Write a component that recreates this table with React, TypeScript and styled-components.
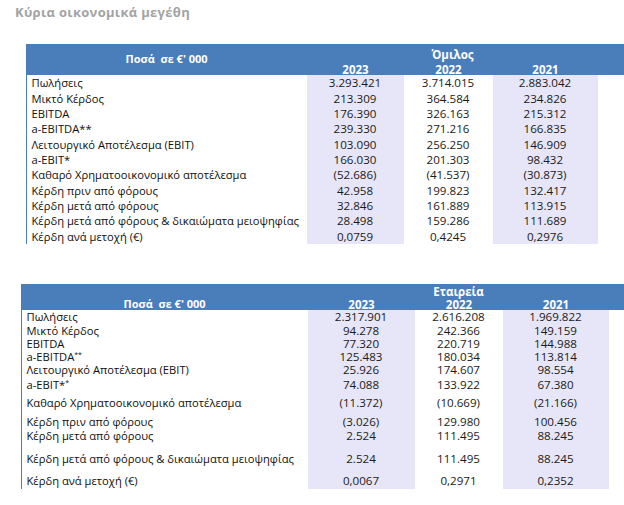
import React from "react";
import styled, { createGlobalStyle } from "styled-components";

const Global = createGlobalStyle`
  html, body { margin: 0; padding: 0; background: #ffffff; }
  body { font-family: "Open Sans", "Noto Sans", sans-serif; color: #1a1a1a; }
`;

const Page = styled.div`
  width: 624px;
  height: 505px;
  overflow: hidden;
  display: flex;
  flex-direction: column;
`;

const Title = styled.h1`
  margin: 4px 0 0 15px;
  height: 17px;
  font-family: "Open Sans", "Noto Sans", sans-serif;
  font-size: 13px;
  line-height: 17px;
  font-weight: 700;
  letter-spacing: 0.3px;
  color: #a3a3a3;
`;

const Table = styled.div<{ $left: number; $top: number; $cols: string }>`
  margin-left: ${(p) => p.$left}px;
  margin-top: ${(p) => p.$top}px;
  display: flex;
  flex-direction: column;
  --cols: ${(p) => p.$cols};
`;

const Head = styled.div<{ $h: number }>`
  height: ${(p) => p.$h}px;
  background: #4a7ebb;
  display: grid;
  grid-template-columns: var(--cols);
  color: #ffffff;
  font-weight: 700;
  font-size: 11.5px;
`;

const HeadLabel = styled.div<{ $align: string }>`
  grid-column: 1;
  display: flex;
  justify-content: center;
  align-items: ${(p) => p.$align};
  padding-bottom: ${(p) => (p.$align === "flex-end" ? "0px" : "1px")};
  white-space: pre;
  font-family: "Open Sans", "Noto Sans", sans-serif;
  font-size: 11px;
  line-height: 14px;
`;

const HeadRows = styled.div<{ $pad: number; $rowH: number }>`
  grid-column: 2 / span 3;
  display: grid;
  grid-template-columns: subgrid;
  grid-template-rows: ${(p) => p.$rowH}px ${(p) => p.$rowH}px;
  padding-top: ${(p) => p.$pad}px;
`;

const HeadGroup = styled.div`
  grid-column: 1 / -1;
  grid-row: 1;
  text-align: center;
  align-self: end;
  line-height: 13px;
`;

const HeadYear = styled.div`
  grid-row: 2;
  text-align: center;
  line-height: 13px;
  align-self: end;
`;

const Body = styled.div`
  display: flex;
  flex-direction: column;
  border-left: 1.5px solid #4a7ebb;
`;

const Row = styled.div<{ $h: number; $pt: number }>`
  display: grid;
  grid-template-columns: var(--cols);
  height: ${(p) => p.$h}px;
  margin-left: -1.5px;
  --pt: ${(p) => p.$pt}px;
`;

const Label = styled.div<{ $pad: number }>`
  padding-left: ${(p) => p.$pad}px;
  padding-top: var(--pt);
  font-family: "Open Sans", "Noto Sans", sans-serif;
  font-size: 11.2px;
  line-height: 12px;
  white-space: nowrap;
  color: #0f0f0f;
`;

const Num = styled.div<{ $shade: boolean }>`
  padding-top: var(--pt);
  text-align: center;
  background: ${(p) => (p.$shade ? "#e6e6f8" : "#ffffff")};
  font-family: "Open Sans", "Noto Sans", sans-serif;
  font-size: 11.6px;
  line-height: 12px;
  color: #1a1a1a;
  white-space: nowrap;
`;

const Sup = styled.sup`
  font-size: 7px;
  line-height: 0;
  vertical-align: 4px;
`;

type RowData = { label: string; vals: [string, string, string]; h: number; pt: number; sup?: string };

const group: RowData[] = [
  { label: "Πωλήσεις", vals: ["3.293.421", "3.714.015", "2.883.042"], h: 16, pt: 2 },
  { label: "Μικτό Κέρδος", vals: ["213.309", "364.584", "234.826"], h: 15.33, pt: 1.67 },
  { label: "EBITDA", vals: ["176.390", "326.163", "215.312"], h: 15.33, pt: 1.67 },
  { label: "a-EBITDA**", vals: ["239.330", "271.216", "166.835"], h: 15.33, pt: 1.67 },
  { label: "Λειτουργικό Αποτέλεσμα (EBIT)", vals: ["103.090", "256.250", "146.909"], h: 15.33, pt: 1.67 },
  { label: "a-EBIT*", vals: ["166.030", "201.303", "98.432"], h: 15.33, pt: 1.67 },
  { label: "Καθαρό Χρηματοοικονομικό αποτέλεσμα", vals: ["(52.686)", "(41.537)", "(30.873)"], h: 15.33, pt: 1.67 },
  { label: "Κέρδη πριν από φόρους", vals: ["42.958", "199.823", "132.417"], h: 15.33, pt: 1.67 },
  { label: "Κέρδη μετά από φόρους", vals: ["32.846", "161.889", "113.915"], h: 15.33, pt: 1.67 },
  { label: "Κέρδη μετά από φόρους & δικαιώματα μειοψηφίας", vals: ["28.498", "159.286", "111.689"], h: 15.33, pt: 1.67 },
  { label: "Κέρδη ανά μετοχή (€)", vals: ["0,0759", "0,4245", "0,2976"], h: 15.5, pt: 1.67 },
];

const company: RowData[] = [
  { label: "Πωλήσεις", vals: ["2.317.901", "2.616.208", "1.969.822"], h: 14, pt: 1 },
  { label: "Μικτό Κέρδος", vals: ["94.278", "242.366", "149.159"], h: 13.25, pt: 1 },
  { label: "EBITDA", vals: ["77.320", "220.719", "144.988"], h: 12.75, pt: 0.25 },
  { label: "a-EBITDA", sup: "**", vals: ["125.483", "180.034", "113.814"], h: 13.25, pt: 0.5 },
  { label: "Λειτουργικό Αποτέλεσμα (EBIT)", vals: ["25.926", "174.607", "98.554"], h: 13.75, pt: 0.75 },
  { label: "a-EBIT*", sup: "*", vals: ["74.088", "133.922", "67.380"], h: 16.5, pt: 1.5 },
  { label: "Καθαρό Χρηματοοικονομικό αποτέλεσμα", vals: ["(11.372)", "(10.669)", "(21.166)"], h: 19, pt: 3.5 },
  { label: "Κέρδη πριν από φόρους", vals: ["(3.026)", "129.980", "100.456"], h: 16.5, pt: 3.5 },
  { label: "Κέρδη μετά από φόρους", vals: ["2.524", "111.495", "88.245"], h: 18.5, pt: 1 },
  { label: "Κέρδη μετά από φόρους & δικαιώματα μειοψηφίας", vals: ["2.524", "111.495", "88.245"], h: 22.5, pt: 5.5 },
  { label: "Κέρδη ανά μετοχή (€)", vals: ["0,0067", "0,2971", "0,2352"], h: 19, pt: 5 },
];

function FinTable(props: {
  left: number;
  top: number;
  cols: string;
  headH: number;
  group: string;
  headAlign: string;
  headPad: number;
  headRowH: number;
  labelPad: number;
  rows: RowData[];
}) {
  return (
    <Table $left={props.left} $top={props.top} $cols={props.cols}>
      <Head $h={props.headH}>
        <HeadLabel $align={props.headAlign}>{"Ποσά  σε €' 000"}</HeadLabel>
        <HeadRows $pad={props.headPad} $rowH={props.headRowH}>
          <HeadGroup>{props.group}</HeadGroup>
          <HeadYear>2023</HeadYear>
          <HeadYear>2022</HeadYear>
          <HeadYear>2021</HeadYear>
        </HeadRows>
      </Head>
      <Body>
        {props.rows.map((r) => (
          <Row key={r.label} $h={r.h} $pt={r.pt}>
            <Label $pad={props.labelPad}>
              {r.label}
              {r.sup ? <Sup>{r.sup}</Sup> : null}
            </Label>
            <Num $shade>{r.vals[0]}</Num>
            <Num $shade={false}>{r.vals[1]}</Num>
            <Num $shade>{r.vals[2]}</Num>
          </Row>
        ))}
      </Body>
    </Table>
  );
}

export default function App() {
  return (
    <Page>
      <Global />
      <Title>Κύρια οικονομικά μεγέθη</Title>
      <FinTable
        left={26}
        top={23}
        cols="281px 97px 89px 105px"
        headH={31}
        group="Όμιλος"
        headAlign="center"
        headPad={1.5}
        headRowH={15}
        labelPad={6}
        rows={group}
      />
      <FinTable
        left={21}
        top={40}
        cols="287px 107px 88px 106px"
        headH={26}
        group="Εταιρεία"
        headAlign="flex-end"
        headPad={0.5}
        headRowH={13}
        labelPad={6}
        rows={company}
      />
    </Page>
  );
}
